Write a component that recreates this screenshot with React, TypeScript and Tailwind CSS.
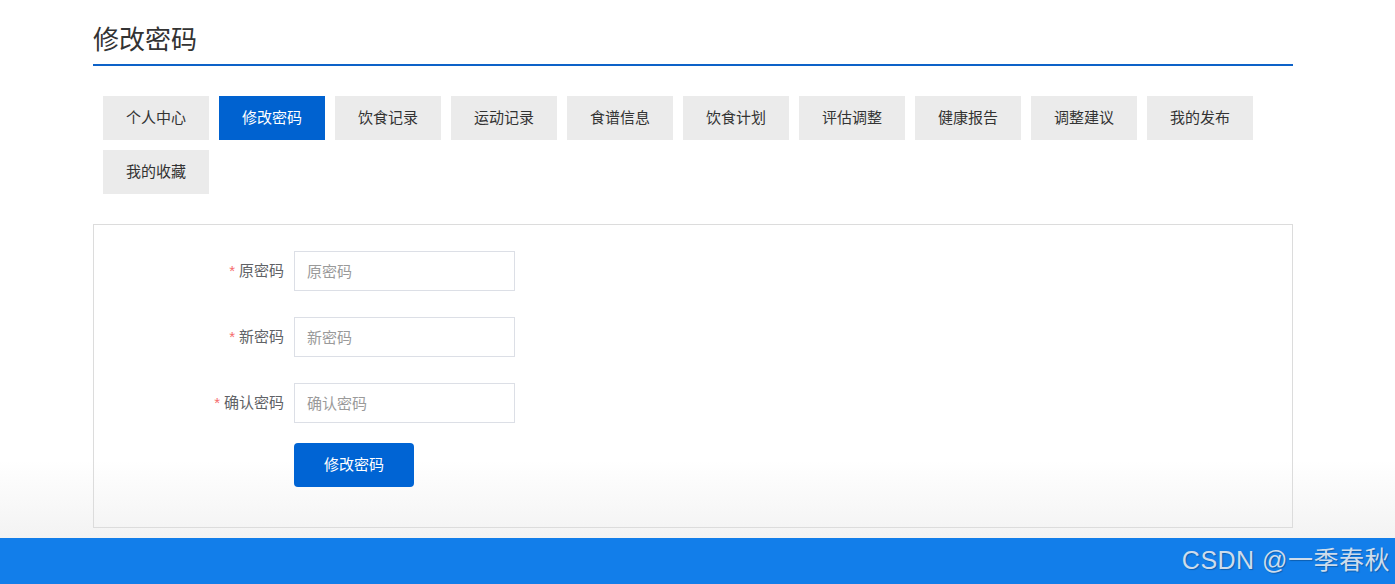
const tabs = [
  "个人中心",
  "修改密码",
  "饮食记录",
  "运动记录",
  "食谱信息",
  "饮食计划",
  "评估调整",
  "健康报告",
  "调整建议",
  "我的发布",
  "我的收藏",
];

const fields = [
  { label: "原密码", placeholder: "原密码" },
  { label: "新密码", placeholder: "新密码" },
  { label: "确认密码", placeholder: "确认密码" },
];

export default function App() {
  return (
    <div
      className="w-[1395px] h-[584px] overflow-hidden"
      style={{ fontFamily: '"Liberation Sans", "Noto Sans CJK SC", sans-serif' }}
    >
      <div className="h-[538px] bg-[linear-gradient(to_bottom,#ffffff_0px,#ffffff_460px,#f3f3f3_538px)]">
        <div className="w-[1200px] ml-[93px]">
          <h1 className="pt-[22px] pb-[6px] leading-[36px] text-[26px] text-[#333] font-normal border-b-2 border-[#0d62c8]">
            修改密码
          </h1>

          <div className="mt-[30px] pl-[10px] flex flex-wrap gap-[10px]">
            {tabs.map((t) => (
              <div
                key={t}
                className={
                  t === "修改密码"
                    ? "w-[106px] h-[44px] flex items-center justify-center text-[15px] bg-[#0062d0] text-white"
                    : "w-[106px] h-[44px] flex items-center justify-center text-[15px] bg-[#ebebeb] text-[#333]"
                }
              >
                {t}
              </div>
            ))}
          </div>

          <div className="mt-[30px] h-[304px] border border-[#dcdcdc] pt-[26px]">
            <div className="flex flex-col gap-[26px]">
              {fields.map((f) => (
                <div key={f.label} className="flex items-center">
                  <label className="w-[200px] pr-[10px] text-right text-[15px] text-[#606266]">
                    <span className="text-[#f56c6c] mr-[4px]">*</span>
                    {f.label}
                  </label>
                  <input
                    type="password"
                    placeholder={f.placeholder}
                    className="w-[221px] h-[40px] border border-[#dcdfe6] bg-white px-[12px] text-[15px] outline-none placeholder:text-[#9a9a9a]"
                  />
                </div>
              ))}
            </div>
            <div className="mt-[20px] pl-[200px]">
              <button className="w-[120px] h-[44px] rounded-[4px] bg-[#0064d4] text-white text-[15px]">
                修改密码
              </button>
            </div>
          </div>
        </div>
      </div>

      <div className="h-[46px] bg-[#127eea] flex items-center justify-end pr-[5px]">
        <span className="text-[25px] text-[#cddcec] [text-shadow:1px_1px_1px_rgba(0,0,0,0.25)] tracking-[0.5px]">
          CSDN @一季春秋
        </span>
      </div>
    </div>
  );
}
